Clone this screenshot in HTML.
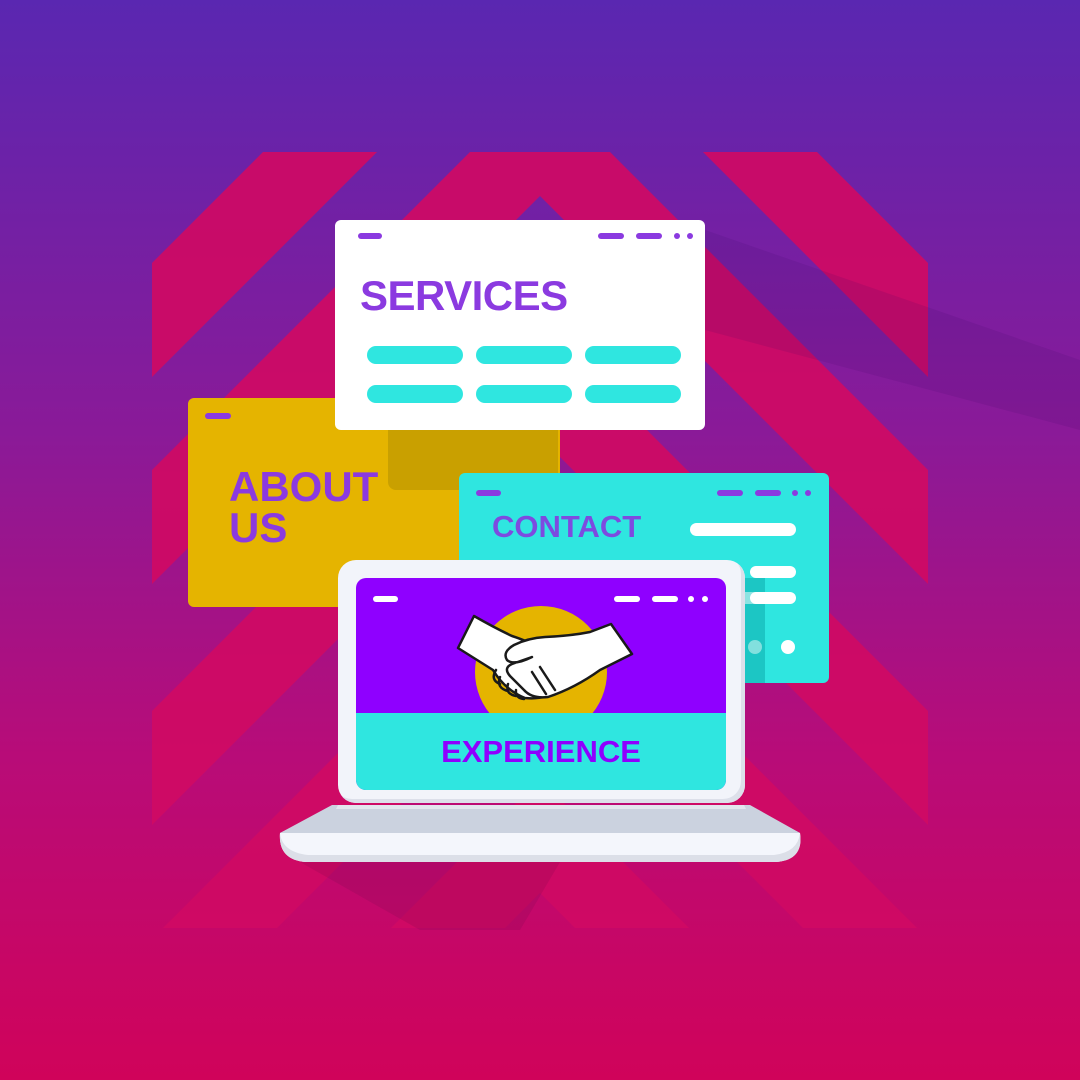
<!DOCTYPE html>
<html><head><meta charset="utf-8"><style>
html,body{margin:0;padding:0;width:1080px;height:1080px;overflow:hidden}
body{background:linear-gradient(180deg,#5a27b1 0%,#8a1a98 40%,#b80c78 70%,#d0035a 100%);position:relative;font-family:"Liberation Sans",sans-serif}
.abs{position:absolute}
.t{font-weight:bold;color:#8b3ae0;white-space:nowrap}
</style></head><body>
<svg class="abs" style="left:0;top:0" width="1080" height="1080">
<defs><clipPath id="sq"><rect x="152" y="152" width="776" height="776"/></clipPath></defs>
<g clip-path="url(#sq)" fill="#d00a64" opacity="0.92">
<path d="M540,-125 L1300,635 L1300,749 L540,-11 L-220,749 L-220,635Z"/>
<path d="M540,82 L1300,842 L1300,956 L540,196 L-220,956 L-220,842Z"/>
<path d="M540,323 L1300,1083 L1300,1197 L540,437 L-220,1197 L-220,1083Z"/>
<path d="M540,551 L1300,1311 L1300,1425 L540,665 L-220,1425 L-220,1311Z"/>
<path d="M540,779 L1300,1539 L1300,1653 L540,893 L-220,1653 L-220,1539Z"/>
</g>
<path d="M705,230 L1080,360 L1080,430 L705,330Z" fill="#3a0a60" opacity="0.12"/>
<path d="M300,862 L560,862 L520,930 L420,930Z" fill="#4a0640" opacity="0.12"/>
</svg>

<!-- About card -->
<div class="abs" style="left:188px;top:398px;width:372px;height:209px;background:#e5b400;border-radius:6px"></div>
<div class="abs" style="left:388px;top:430px;width:170px;height:60px;background:#c9a000;border-radius:0 0 0 8px"></div>
<div class="abs" style="left:205px;top:413px;width:26px;height:6px;background:#8b3ae0;border-radius:3px"></div>
<div class="abs t" style="left:229px;top:466px;font-size:42px;line-height:41px;letter-spacing:0px">ABOUT<br>US</div>

<!-- Services card -->
<div class="abs" style="left:335px;top:220px;width:370px;height:210px;background:#fff;border-radius:6px"></div>
<svg class="abs" style="left:335px;top:220px" width="370" height="210">
<g fill="#8b3ae0"><rect x="23" y="13" width="24" height="6" rx="3"/><rect x="263" y="13" width="26" height="6" rx="3"/><rect x="301" y="13" width="26" height="6" rx="3"/><circle cx="342" cy="16" r="3"/><circle cx="355" cy="16" r="3"/></g>
<g fill="#2fe6e0"><rect x="32" y="126" width="96" height="18" rx="9"/><rect x="141" y="126" width="96" height="18" rx="9"/><rect x="250" y="126" width="96" height="18" rx="9"/><rect x="32" y="165" width="96" height="18" rx="9"/><rect x="141" y="165" width="96" height="18" rx="9"/><rect x="250" y="165" width="96" height="18" rx="9"/></g>
</svg>
<div class="abs t" style="left:360px;top:274px;font-size:42px;line-height:44px;letter-spacing:-0.5px">SERVICES</div>

<!-- Contact card -->
<div class="abs" style="left:459px;top:473px;width:370px;height:210px;background:#2fe6e0;border-radius:6px"></div>
<svg class="abs" style="left:459px;top:473px" width="370" height="210">
<g fill="#8b3ae0"><rect x="17" y="17" width="25" height="6" rx="3"/><rect x="258" y="17" width="26" height="6" rx="3"/><rect x="296" y="17" width="26" height="6" rx="3"/><circle cx="336" cy="20" r="3"/><circle cx="349" cy="20" r="3"/></g>
<rect x="286" y="105" width="20" height="105" fill="#1cc6c4"/>
<g fill="#fff"><rect x="231" y="50" width="106" height="13" rx="6.5"/><rect x="291" y="93" width="46" height="12" rx="6"/><rect x="291" y="119" width="46" height="12" rx="6"/><circle cx="329" cy="174" r="7"/></g>
<rect x="286" y="119" width="20" height="12" fill="#fff" opacity="0.5"/>
<circle cx="296" cy="174" r="7" fill="#fff" opacity="0.45"/>
</svg>
<div class="abs t" style="left:492px;top:510px;font-size:31px;line-height:34px;color:#7d4be0">CONTACT</div>

<!-- Laptop -->
<div class="abs" style="left:338px;top:560px;width:407px;height:243px;background:#f2f4fa;border-radius:18px;box-shadow:inset -4px -4px 0 #dde0ea"></div>
<div class="abs" style="left:356px;top:578px;width:370px;height:212px;border-radius:10px;overflow:hidden;background:#8f00ff">
<svg width="370" height="212" style="display:block">
<circle cx="185" cy="94" r="66" fill="#e5b400"/>
<rect x="0" y="135" width="370" height="77" fill="#2fe6e0"/>
<g fill="#fff"><rect x="17" y="18" width="25" height="6" rx="3"/><rect x="258" y="18" width="26" height="6" rx="3"/><rect x="296" y="18" width="26" height="6" rx="3"/><circle cx="335" cy="21" r="3"/><circle cx="349" cy="21" r="3"/></g>
<g transform="translate(-356,-578)" fill="#fff" stroke="#1a1a1a" stroke-width="2.5" stroke-linejoin="round" stroke-linecap="round">
<path d="M474,616 L458,648 L493,670 Q505,690 525,698 Q545,700 560,690 L545,650 Q525,640 512,636 Q495,628 474,616Z"/>
<path d="M611,624 L632,654 L600,670 Q575,688 548,697 Q532,699 524,690 L510,676 Q503,668 512,664 L532,657 Q514,666 507,660 Q502,652 514,645 Q528,638 545,637 Q570,636 590,632 Z"/>
<path d="M496,670 Q490,680 500,684 M500,677 Q496,688 508,691 M508,684 Q505,694 516,696 M516,690 Q515,698 524,699" fill="none"/>
<path d="M540,667 L555,690 M532,672 L546,694" fill="none"/>
</g>
</svg>
</div>
<div class="abs t" style="left:356px;top:735px;width:370px;text-align:center;font-size:31px;line-height:34px;color:#8f00ff">EXPERIENCE</div>
<svg class="abs" style="left:276px;top:800px" width="530" height="66">
<path d="M62,5 L468,5 L524,33 Q528,60 500,62 L30,62 Q2,60 4,33 Z" fill="#f4f6fc"/>
<path d="M4,33 Q2,60 30,62 L500,62 Q528,60 524,33 Q522,52 498,55 L32,55 Q6,52 4,33Z" fill="#dcdfe8"/>
<path d="M56,5 L474,5 L524,33 L4,33Z" fill="#cbd2df"/>
<path d="M62,5 L468,5 L470,9 L60,9Z" fill="#e2e6ee"/>
</svg>
</body></html>
